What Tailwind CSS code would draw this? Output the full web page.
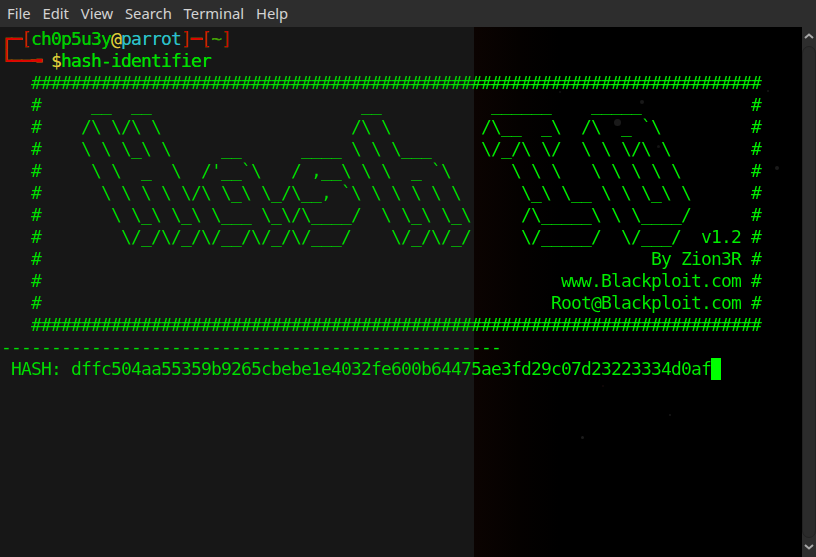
<!DOCTYPE html>
<html lang="en">
<head>
    <meta charset="UTF-8">
    <title>Terminal</title>
    <script src="https://cdn.jsdelivr.net/npm/@tailwindcss/browser@4"></script>
</head>
<body class="w-[816px] h-[557px] overflow-hidden flex flex-col bg-black">
    <!-- Menu bar -->
    <div class="h-[27px] bg-[#2d2d2d] flex items-center gap-[11.8px] pl-[7px] text-[14.8px] text-[#d3d3d3] font-['Noto_Sans',sans-serif]">
        <span>File</span>
        <span>Edit</span>
        <span>View</span>
        <span>Search</span>
        <span>Terminal</span>
        <span>Help</span>
    </div>

    <div class="flex flex-1 min-h-0">
        <!-- Terminal area -->
        <div class="relative flex-1 pt-px pl-px bg-[linear-gradient(90deg,#171717_474px,#0b0301_474px,#040100_520px,#000_560px)]">
            <!-- wallpaper specks -->
            <span class="absolute left-[614px] top-[92px] w-[7px] h-[7px] rounded-full bg-[#1a1a1a]"></span>
            <span class="absolute left-[640px] top-[73px] w-[4px] h-[4px] rounded-full bg-[#181818]"></span>
            <span class="absolute left-[775px] top-[139px] w-[4px] h-[4px] rounded-full bg-[#1a1a1a]"></span>
            <span class="absolute left-[657px] top-[118px] w-[3px] h-[3px] rounded-full bg-[#141414]"></span>
            <span class="absolute left-[767px] top-[63px] w-[2px] h-[2px] rounded-full bg-[#161616]"></span>
            <span class="absolute left-[559px] top-[64px] w-[2px] h-[2px] rounded-full bg-[#141414]"></span>
            <span class="absolute left-[581px] top-[409px] w-[3px] h-[3px] rounded-full bg-[#1c1c1c]"></span>
            <span class="absolute left-[669px] top-[387px] w-[2px] h-[2px] rounded-full bg-[#181818]"></span>
            <span class="absolute left-[602px] top-[358px] w-[2px] h-[2px] rounded-full bg-[#120808]"></span>

            <pre class="relative font-['DejaVu_Sans_Mono',monospace] text-[18px] tracking-[-0.836px] leading-[22px] text-transparent bg-clip-text bg-[linear-gradient(90deg,#00e000_473px,#00f000_473px)] whitespace-pre"><span class="text-[#e00000] [-webkit-text-stroke:0.7px_#e00000]">┌─</span><span class="text-[#cc0000]">[</span><span class="text-[#00cc00]">ch0p5u3y</span><span class="text-[#f0c040]">@</span><span class="text-[#33b5d8]">parrot</span><span class="text-[#cc0000]">]</span><span class="text-[#e00000] [-webkit-text-stroke:0.7px_#e00000]">─</span><span class="text-[#cc0000]">[</span><span class="text-[#4e9a06]">~</span><span class="text-[#cc0000]">]</span>
<span class="text-[#e00000] [-webkit-text-stroke:0.7px_#e00000]">└──╼ </span><span class="text-[#f0c040]">$</span><span class="text-[#00e000]">hash-identifier</span>
   #########################################################################
   #     __  __                     __           ______    _____           #
   #    /\ \/\ \                   /\ \         /\__  _\  /\  _ `\         #
   #    \ \ \_\ \     __      ____ \ \ \___     \/_/\ \/  \ \ \/\ \        #
   #     \ \  _  \  /'__`\   / ,__\ \ \  _ `\      \ \ \   \ \ \ \ \       #
   #      \ \ \ \ \/\ \_\ \_/\__, `\ \ \ \ \ \      \_\ \__ \ \ \_\ \      #
   #       \ \_\ \_\ \___ \_\/\____/  \ \_\ \_\     /\_____\ \ \____/      #
   #        \/_/\/_/\/__/\/_/\/___/    \/_/\/_/     \/_____/  \/___/  v1.2 #
   #                                                             By Zion3R #
   #                                                    www.Blackploit.com #
   #                                                   Root@Blackploit.com #
   #########################################################################
--------------------------------------------------
 HASH: dffc504aa55359b9265cbebe1e4032fe600b64475ae3fd29c07d23223334d0af<span class="inline-block w-[10px] h-[22px] align-top bg-[#00ff00]"></span></pre>
        </div>

        <!-- Scrollbar -->
        <div class="w-[14px] bg-[#2d2d2d] flex flex-col items-center">
            <svg class="mt-[6px] shrink-0" width="10" height="6" viewBox="0 0 10 6" fill="none" stroke="#a8a8a8" stroke-width="2"><path d="M1 5l4-3.5L9 5"/></svg>
            <div class="mt-[7px] flex-1 w-full rounded-[7px] border border-[#222222] bg-[#2b2b2b]"></div>
            <svg class="mt-[6px] mb-[7px] shrink-0" width="10" height="6" viewBox="0 0 10 6" fill="none" stroke="#a8a8a8" stroke-width="2"><path d="M1 1l4 3.5L9 1"/></svg>
        </div>
    </div>
</body>
</html>
